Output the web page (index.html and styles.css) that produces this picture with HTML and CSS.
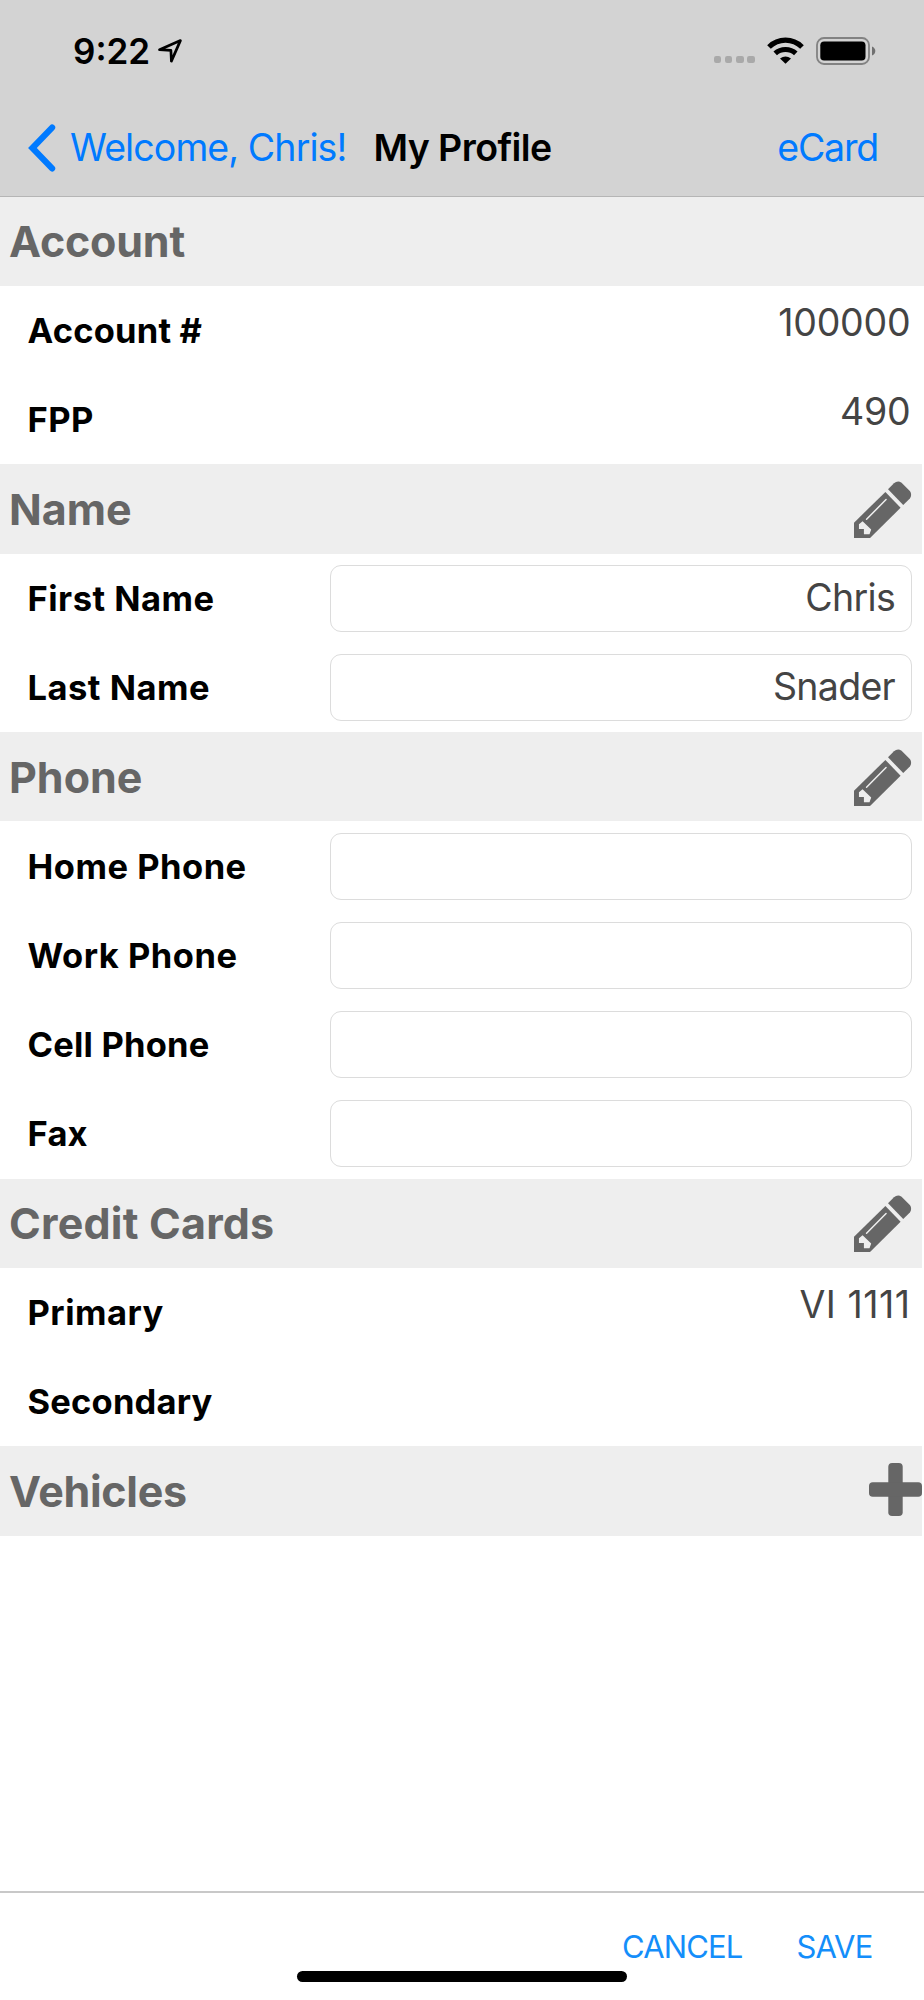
FILE: index.html
```html
<!DOCTYPE html>
<html lang="en">
<head>
<meta charset="utf-8">
<title>My Profile</title>
<link rel="stylesheet" href="styles.css">
</head>
<body>
<svg class="defs" aria-hidden="true">
  <symbol id="pencil" viewBox="91 61 174 174">
    <path fill="#666" d="M91 187 186 94 232 142 139 234H91Z"/>
    <path fill="#666" d="M194 86 212 68Q223 58 235 66L260 91Q268 102 260 114L240 134Z"/>
    <path stroke="#eee" stroke-width="4.5" stroke-linecap="round" d="M129 177 188 117"/>
    <path fill="#eee" d="M117 183 143 208 138 222H121V206H106V192Z"/>
  </symbol>
</svg>
<div class="screen">
  <header class="top">
    <div class="status">
      <span class="time">9:22</span>
      <svg class="location" viewBox="0 0 24 24"><path fill="none" stroke="#000" stroke-width="2.7" stroke-linejoin="round" d="M1.5 10.7 22.4 1.6 13.4 22.1 12.9 11.4Z"/></svg>
      <div class="signal"><i></i><i></i><i></i><i></i></div>
      <svg class="wifi" viewBox="0 0 37 27">
        <path fill="none" stroke="#000" stroke-width="5.2" d="M2 10Q9 3.2 18.5 3.2T35 10"/>
        <path fill="none" stroke="#000" stroke-width="5.2" d="M8.2 16.4Q12.5 12.5 18.5 12.5T28.8 16.4"/>
        <path d="M13 21.4Q18.5 17.4 24 21.4L18.5 26.8Z"/>
      </svg>
      <svg class="battery" viewBox="0 0 60 28">
        <rect x="1" y="1" width="52" height="26" rx="7" fill="none" stroke="#828282" stroke-width="1.8"/>
        <rect x="4.3" y="4.5" width="45.2" height="19" rx="3.8"/>
        <path fill="#707070" d="M56 9.5Q59.3 11 59.3 14T56 18.5Z"/>
      </svg>
    </div>
    <nav class="nav">
      <svg class="back" viewBox="0 0 28 48"><path fill="none" stroke="#007aff" stroke-width="6.2" stroke-linecap="round" stroke-linejoin="miter" d="M24.1 3.6 4.4 24 24.1 44.4"/></svg>
      <a class="link welcome">Welcome, Chris!</a>
      <h1 class="title">My Profile</h1>
      <a class="link ecard">eCard</a>
    </nav>
  </header>
  <main class="list">
    <h2 class="section wide"><span>Account</span></h2>
    <div class="row"><span class="label tight">Account #</span><span class="value">100000</span></div>
    <div class="row"><span class="label">FPP</span><span class="value">490</span></div>
    <h2 class="section"><span>Name</span><svg class="pencil"><use href="#pencil"/></svg></h2>
    <div class="row"><span class="label">First Name</span><span class="field">Chris</span></div>
    <div class="row"><span class="label">Last Name</span><span class="field">Snader</span></div>
    <h2 class="section"><span>Phone</span><svg class="pencil"><use href="#pencil"/></svg></h2>
    <div class="row"><span class="label">Home Phone</span><span class="field"></span></div>
    <div class="row"><span class="label">Work Phone</span><span class="field"></span></div>
    <div class="row"><span class="label tight">Cell Phone</span><span class="field"></span></div>
    <div class="row"><span class="label tight">Fax</span><span class="field"></span></div>
    <h2 class="section cards"><span>Credit Cards</span><svg class="pencil"><use href="#pencil"/></svg></h2>
    <div class="row"><span class="label">Primary</span><span class="value card">VI 1111</span></div>
    <div class="row"><span class="label tight">Secondary</span></div>
    <h2 class="section add"><span>Vehicles</span><svg class="plus" viewBox="0 0 53 53"><rect x="19.3" width="14.4" height="53" rx="3.8"/><rect y="19.3" width="53" height="14.4" rx="3.8"/></svg></h2>
  </main>
  <footer class="footer">
    <div class="actions"><a class="cancel">CANCEL</a><a class="save">SAVE</a></div>
    <div class="home"></div>
  </footer>
</div>
</body>
</html>
```

FILE: styles.css
```css
* { box-sizing: border-box; }
body { margin: 0; background: #fff; font-family: Inter, "Liberation Sans", sans-serif; }
.defs { position: absolute; width: 0; height: 0; }
.screen { display: flex; flex-direction: column; width: 924px; height: 2000px; overflow: hidden; }

.top { height: 196.6px; background: #d3d3d3; border-bottom: 1px solid #b5b5b5; }
.status { display: flex; align-items: center; height: 101px; padding-left: 73px; }
.time { width: 85px; font-size: 35px; font-weight: 600; }
.location { width: 24px; height: 24px; }
.signal { display: flex; gap: 3.5px; margin: 18px 0 0 531.5px; }
.signal i { width: 7.7px; height: 7.5px; border-radius: 2.2px; background: #a9a9a9; }
.wifi { width: 37px; height: 27px; margin-left: 12.5px; }
.battery { width: 60px; height: 28px; margin-left: 12px; }

.nav { display: flex; align-items: center; height: 95px; padding: 0 46px 2px 28px; font-size: 37.5px; white-space: nowrap; }
.back { width: 28px; height: 48px; margin-top: 1px; }
.link { color: #007aff; }
.welcome { width: 305px; margin-left: 14px; letter-spacing: -0.9px; }
.title { margin: 0 0 0 -1.5px; font-size: 37.5px; font-weight: 600; letter-spacing: -0.6px; }
.ecard { margin-left: auto; letter-spacing: -1.2px; }

.section, .row { display: flex; align-items: center; height: 89.28px; }
.section { width: 922px; margin: 0; padding: 0 10.5px 0 9px; background: #eee; color: #666; font-size: 43px; font-weight: 700; }
.section span { padding-bottom: 0.5px; }
.wide { width: auto; letter-spacing: -0.2px; }
.cards { letter-spacing: 0.2px; }
.add { padding-right: 0.5px; letter-spacing: -0.3px; }
.pencil { width: 57.5px; height: 57.5px; margin: 1px 0 0 auto; }
.plus { width: 53px; height: 53px; margin: 0 0 3px auto; fill: #666; }
.row { padding: 0 12px 0 27.5px; }
.label { width: 302.5px; flex: none; font-size: 34.5px; font-weight: 700; letter-spacing: 0.5px; }
.tight { letter-spacing: 0.2px; }
.value { margin: 0 1.5px 0 auto; padding-bottom: 16px; color: #444; font-size: 37.5px; letter-spacing: -0.2px; }
.card { letter-spacing: 0.5px; }
.field { display: flex; flex: 1; align-items: center; justify-content: flex-end; height: 67px; margin-right: 0.5px; padding: 0 15.5px 2px 0; border: 1px solid #dcdcdc; border-radius: 11px; color: #444; font-size: 37.5px; letter-spacing: -0.7px; }

.footer { display: flex; flex-direction: column; height: 109.5px; margin-top: auto; border-top: 2px solid #c8c8c8; }
.actions { display: flex; justify-content: flex-end; padding: 35.5px 51.5px 0 0; color: #148efa; font-size: 31px; line-height: 38px; letter-spacing: -0.85px; }
.save { margin-left: 54px; letter-spacing: -0.8px; }
.home { width: 330px; height: 11px; margin: 4.5px 0 0 297px; border-radius: 5.5px; background: #000; }
```
